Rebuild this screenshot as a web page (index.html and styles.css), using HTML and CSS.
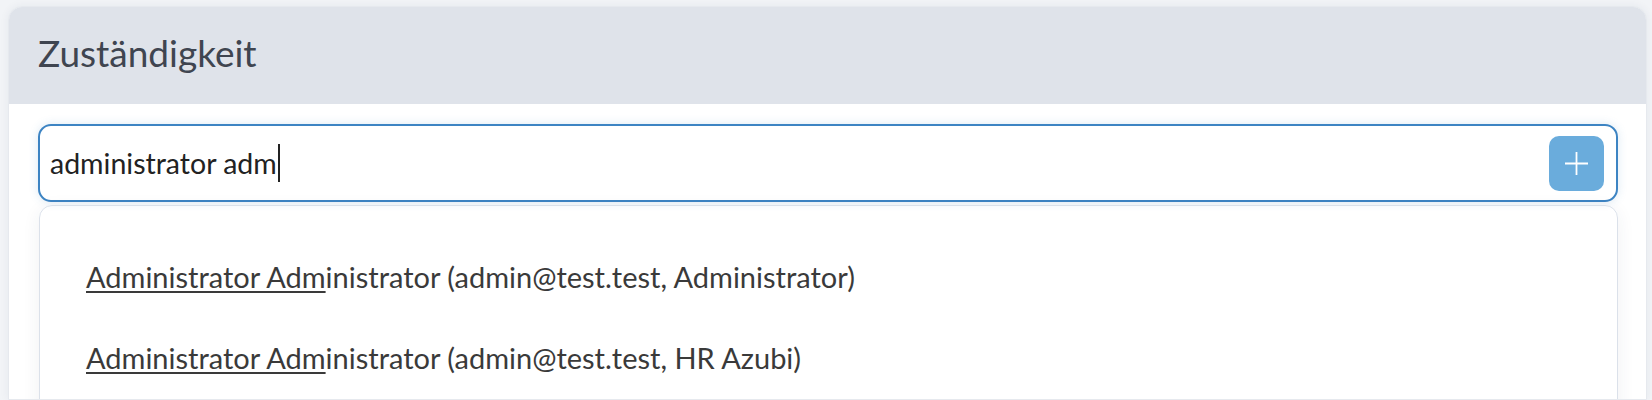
FILE: index.html
```html
<!DOCTYPE html>
<html lang="de">
<head>
    <meta charset="UTF-8">
    <title>Zuständigkeit</title>
    <link rel="stylesheet" href="styles.css">
</head>
<body>
<div class="page">
    <div class="card">
        <div class="card-header">
            <h2 class="card-title">Zuständigkeit</h2>
        </div>
        <div class="card-body">
            <div class="search">
                <div class="search-field">
                    <span class="search-text">administrator adm</span><span class="caret"></span>
                </div>
                <button class="add-btn" type="button">
                    <svg width="23" height="23" viewBox="0 0 23 23">
                        <path d="M11.5 0 V23 M0 11.5 H23" stroke="#fff" stroke-width="1.8" fill="none"/>
                    </svg>
                </button>
            </div>
            <ul class="suggest">
                <li><u>Administrator Adm</u>inistrator (admin@test.test, Administrator)</li>
                <li><u>Administrator Adm</u>inistrator (admin@test.test, HR Azubi)</li>
            </ul>
        </div>
    </div>
</div>
</body>
</html>
```

FILE: styles.css
```css
* {
    margin: 0;
    padding: 0;
    box-sizing: border-box;
}

body {
    background: #f2f4f7;
    font-family: "Lato", "Open Sans", sans-serif;
    color: #3a3c40;
    overflow: hidden;
}

.page {
    padding: 6px 5px 0 8px;
}

.card {
    border: 1px solid #e6e9ee;
    border-radius: 14px 14px 0 0;
    overflow: hidden;
    background: #fff;
    box-shadow: 0 0 10px rgba(30, 50, 80, 0.06);
    height: 394px;
}

.card-header {
    background: #dfe3ea;
    height: 97px;
    display: flex;
    align-items: center;
    padding: 0 0 6px 29px;
}

.card-title {
    font-weight: 400;
    font-size: 37px;
    color: #3f4550;
}

.card-body {
    padding: 20px 28px 0 29px;
}

.search {
    height: 78px;
    border: 2px solid #3d84c3;
    border-radius: 13px;
    display: flex;
    align-items: center;
    padding: 0 12px 0 10px;
    box-shadow: 0 0 10px rgba(61, 132, 195, 0.18);
}

.search-field {
    flex: 1;
    display: flex;
    align-items: center;
    font-size: 28.5px;
    color: #222;
}

.caret {
    display: inline-block;
    width: 2px;
    height: 38px;
    margin-left: 1px;
    background: #222;
}

.add-btn {
    width: 55px;
    height: 55px;
    border: 0;
    border-radius: 10px;
    background: #6aacdc;
    display: flex;
    align-items: center;
    justify-content: center;
}

.suggest {
    list-style: none;
    margin: 3px 0 0 1px;
    border: 1px solid #dbe1ea;
    border-radius: 13px;
    padding: 30px 0 0 46px;
    height: 240px;
    box-shadow: 0 4px 18px rgba(40, 60, 90, 0.07);
    font-size: 29px;
    color: #3a3a3a;
}

.suggest li {
    height: 81px;
    line-height: 81px;
}

.suggest u {
    text-underline-offset: 3px;
}
```
